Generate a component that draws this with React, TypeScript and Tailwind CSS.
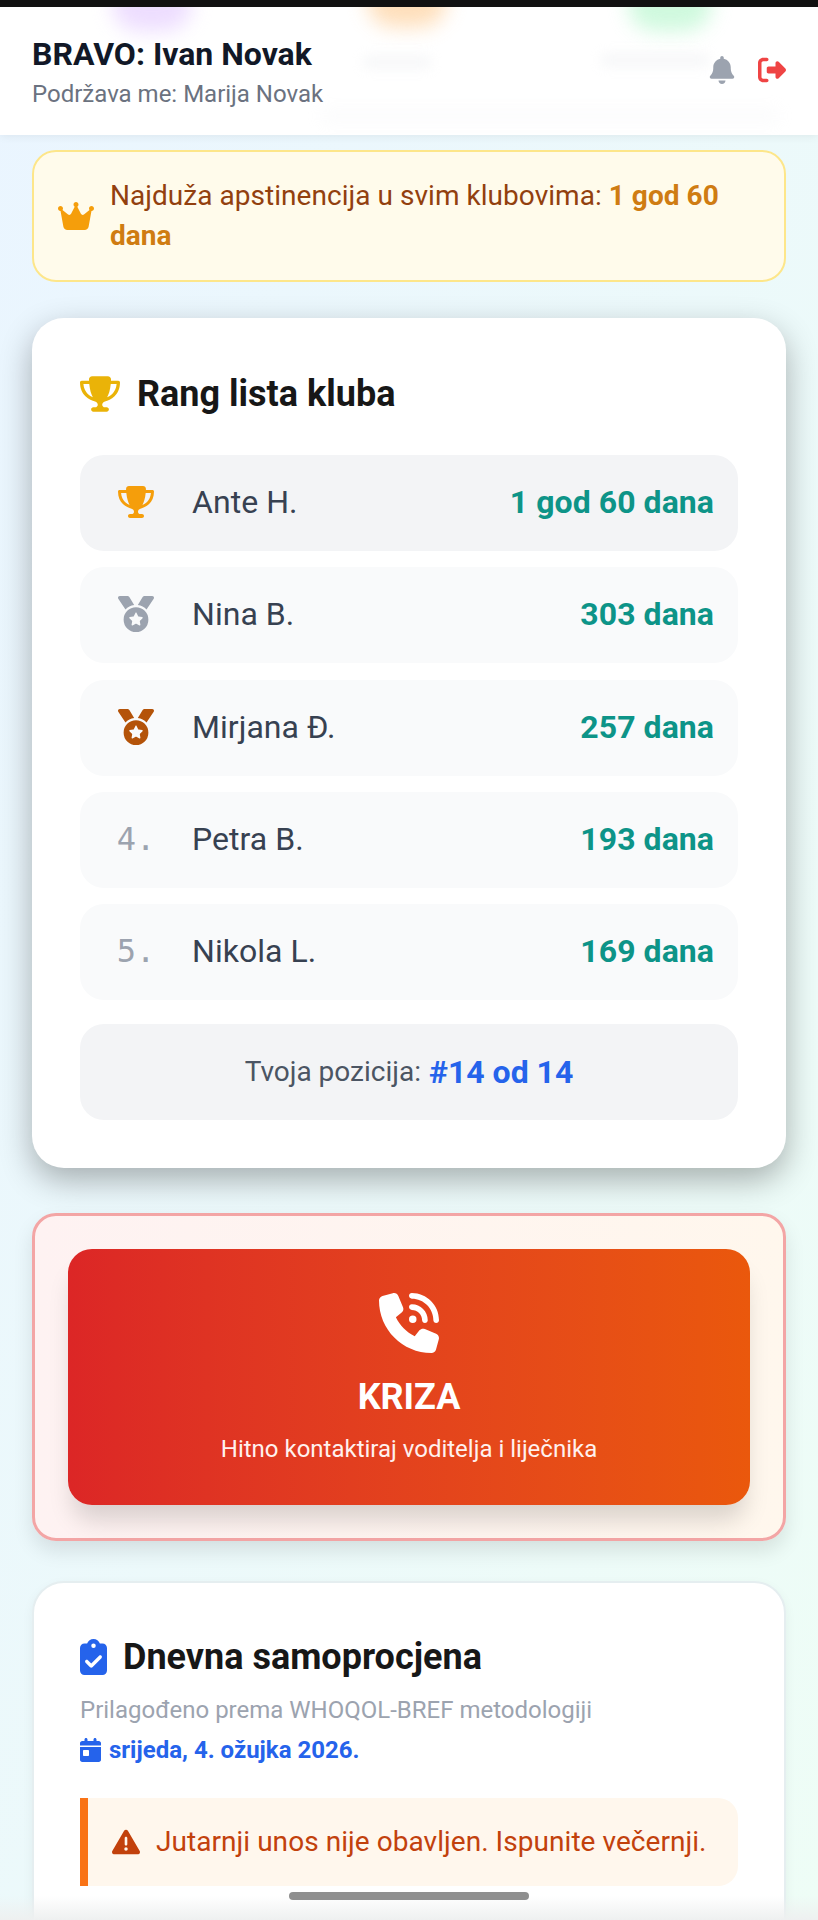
import React from "react";
import {
  FaBell,
  FaRightFromBracket,
  FaCrown,
  FaTrophy,
  FaMedal,
  FaPhoneVolume,
  FaClipboardCheck,
  FaCalendarDay,
  FaTriangleExclamation,
} from "react-icons/fa6";

const rows = [
  { name: "Ante H.", days: "1 god 60 dana", rank: "gold" },
  { name: "Nina B.", days: "303 dana", rank: "silver" },
  { name: "Mirjana Đ.", days: "257 dana", rank: "bronze" },
  { name: "Petra B.", days: "193 dana", rank: "4." },
  { name: "Nikola L.", days: "169 dana", rank: "5." },
];

function Rank({ rank }: { rank: string }) {
  if (rank === "gold") return <FaTrophy className="text-[36px] text-[#f59e0b]" />;
  if (rank === "silver") return <FaMedal className="text-[36px] text-[#9ca3af]" />;
  if (rank === "bronze") return <FaMedal className="text-[36px] text-[#b45309]" />;
  return <span className="font-['DejaVu_Sans_Mono',monospace] text-[32px] text-[#9ca3af]">{rank}</span>;
}

export default function App() {
  return (
    <div className="relative h-[1920px] w-[818px] overflow-hidden bg-gradient-to-br from-[#eaf5ff] to-[#eefdf6] font-['Roboto',sans-serif]">
      <header className="relative h-[135px] overflow-hidden border-t-[7px] border-[#111111] bg-white shadow-[0_2px_8px_rgba(0,0,0,0.06)]">
        <div className="absolute -top-[30px] left-[112px] h-[54px] w-[80px] rounded-full bg-[#e9d5ff] opacity-80 blur-[10px]" />
        <div className="absolute -top-[34px] left-[367px] h-[54px] w-[80px] rounded-full bg-[#fed7aa] opacity-80 blur-[10px]" />
        <div className="absolute -top-[30px] left-[628px] h-[54px] w-[84px] rounded-full bg-[#bbf7d0] opacity-70 blur-[10px]" />
        <div className="absolute left-[362px] top-[48px] h-[14px] w-[70px] rounded-full bg-[#e5e7eb] opacity-30 blur-[6px]" />
        <div className="absolute left-[600px] top-[46px] h-[14px] w-[110px] rounded-full bg-[#e5e7eb] opacity-30 blur-[6px]" />
        <div className="absolute left-[320px] top-[102px] h-[14px] w-[460px] rounded-full bg-[#e5e7eb] opacity-15 blur-[8px]" />
        <div className="relative flex h-full items-center justify-between pl-8 pr-[32px]">
          <div className="mt-[1px] flex flex-col gap-[4px]">
            <h1 className="text-[32px] leading-[40px] font-bold text-[#111827]">BRAVO: Ivan Novak</h1>
            <p className="text-[24px] leading-[32px] text-[#6b7280]">Podržava me: Marija Novak</p>
          </div>
          <div className="-mt-[2px] flex items-center gap-[22px]">
            <FaBell className="text-[28px] text-[#9ca3af]" />
            <FaRightFromBracket className="text-[28px] text-[#ef4444]" />
          </div>
        </div>
      </header>

      <main className="flex flex-col px-8 pt-[15px]">
        <section className="flex h-[132px] items-center gap-[16px] rounded-[24px] border-2 border-[#fde68a] bg-[#fffbeb] pl-[24px] pr-[24px]">
          <FaCrown className="shrink-0 text-[36px] text-[#f59e0b]" />
          <p className="text-[28px] leading-[40px] tracking-[0.04px] text-[#92400e]">
            Najduža apstinencija u svim klubovima: <strong className="font-bold text-[#cf7c12]">1 god 60 dana</strong>
          </p>
        </section>

        <section className="mt-[36px] flex h-[850px] flex-col rounded-[32px] bg-white px-[48px] pt-[56px] shadow-[0_12px_32px_rgba(0,0,0,0.3)]">
          <div className="flex h-[40px] items-center gap-[17px]">
            <FaTrophy className="text-[40px] text-[#eab308]" />
            <h2 className="text-[36px] font-bold leading-[40px] text-[#171717]">Rang lista kluba</h2>
          </div>
          <ul className="mt-[41px] flex flex-col gap-[16.3px]">
            {rows.map((r, i) => (
              <li
                key={r.name}
                className={`flex h-[96px] items-center rounded-[24px] pb-[2px] pl-[24px] pr-[24px] ${i === 0 ? "bg-[#f3f4f6]" : "bg-[#f9fafb]"}`}
              >
                <div className="flex w-[64px] justify-center">
                  <Rank rank={r.rank} />
                </div>
                <span className="ml-[24px] text-[32px] leading-[40px] tracking-[0.05px] text-[#374151]">{r.name}</span>
                <span className="ml-auto text-[32px] font-bold leading-[40px] tracking-[0.05px] text-[#0d9488]">{r.days}</span>
              </li>
            ))}
          </ul>
          <div className="mt-[24px] flex h-[96px] items-center justify-center gap-[8px] rounded-[24px] bg-[#f3f4f6]">
            <span className="text-[28px] text-[#4b5563]">Tvoja pozicija:</span>
            <span className="text-[32px] font-bold text-[#2563eb]">#14 od 14</span>
          </div>
        </section>

        <section className="mt-[45px] h-[328px] rounded-[24px] border-[3px] border-[#f3a5a5] bg-gradient-to-r from-[#fef2f2] to-[#fff7ed] p-[33px] shadow-[0_10px_20px_rgba(0,0,0,0.1)]">
          <div className="flex h-[256px] flex-col items-center rounded-[24px] bg-gradient-to-r from-[#dc2626] to-[#ea580c] pt-[44px] text-white shadow-[0_20px_25px_-5px_rgba(0,0,0,0.15)]">
            <FaPhoneVolume className="text-[60px]" />
            <div className="mt-[24px] text-[36px] font-bold leading-[40px]">KRIZA</div>
            <div className="mt-[16px] text-[24px] leading-[32px] text-[#fff1ee]">Hitno kontaktiraj voditelja i liječnika</div>
          </div>
        </section>

        <section className="mt-[40px] h-[400px] rounded-[32px] border-2 border-[#e5eef0] bg-white px-[46px] pt-[54px] shadow-[0_4px_12px_rgba(0,0,0,0.05)]">
          <div className="flex items-center gap-[16px]">
            <FaClipboardCheck className="w-[27px] text-[36px] text-[#2563eb]" />
            <h2 className="text-[36px] font-bold leading-[40px] text-[#171717]">Dnevna samoprocjena</h2>
          </div>
          <p className="mt-[17px] text-[24px] leading-[32px] text-[#9ca3af]">Prilagođeno prema WHOQOL-BREF metodologiji</p>
          <p className="mt-[8px] flex items-center gap-[8px] text-[24px] font-bold leading-[32px] text-[#2563eb]">
            <FaCalendarDay className="w-[21px] text-[24px]" /> srijeda, 4. ožujka 2026.
          </p>
          <div className="mt-[32px] flex h-[88px] items-center gap-[16px] rounded-r-[20px] border-l-[8px] border-[#f97316] bg-[#fff7ed] pl-[24px]">
            <FaTriangleExclamation className="text-[28px] text-[#c2410c]" />
            <span className="text-[28px] leading-[36px] tracking-[0.05px] text-[#c2410c]">Jutarnji unos nije obavljen. Ispunite večernji.</span>
          </div>
        </section>
      </main>

      <div className="absolute inset-x-0 bottom-0 h-[24px] bg-gradient-to-b from-transparent to-[#eef0f0]" />
      <div className="absolute bottom-[20px] left-[289px] h-[8px] w-[240px] rounded-full bg-[#8f8f8f]" />
    </div>
  );
}
